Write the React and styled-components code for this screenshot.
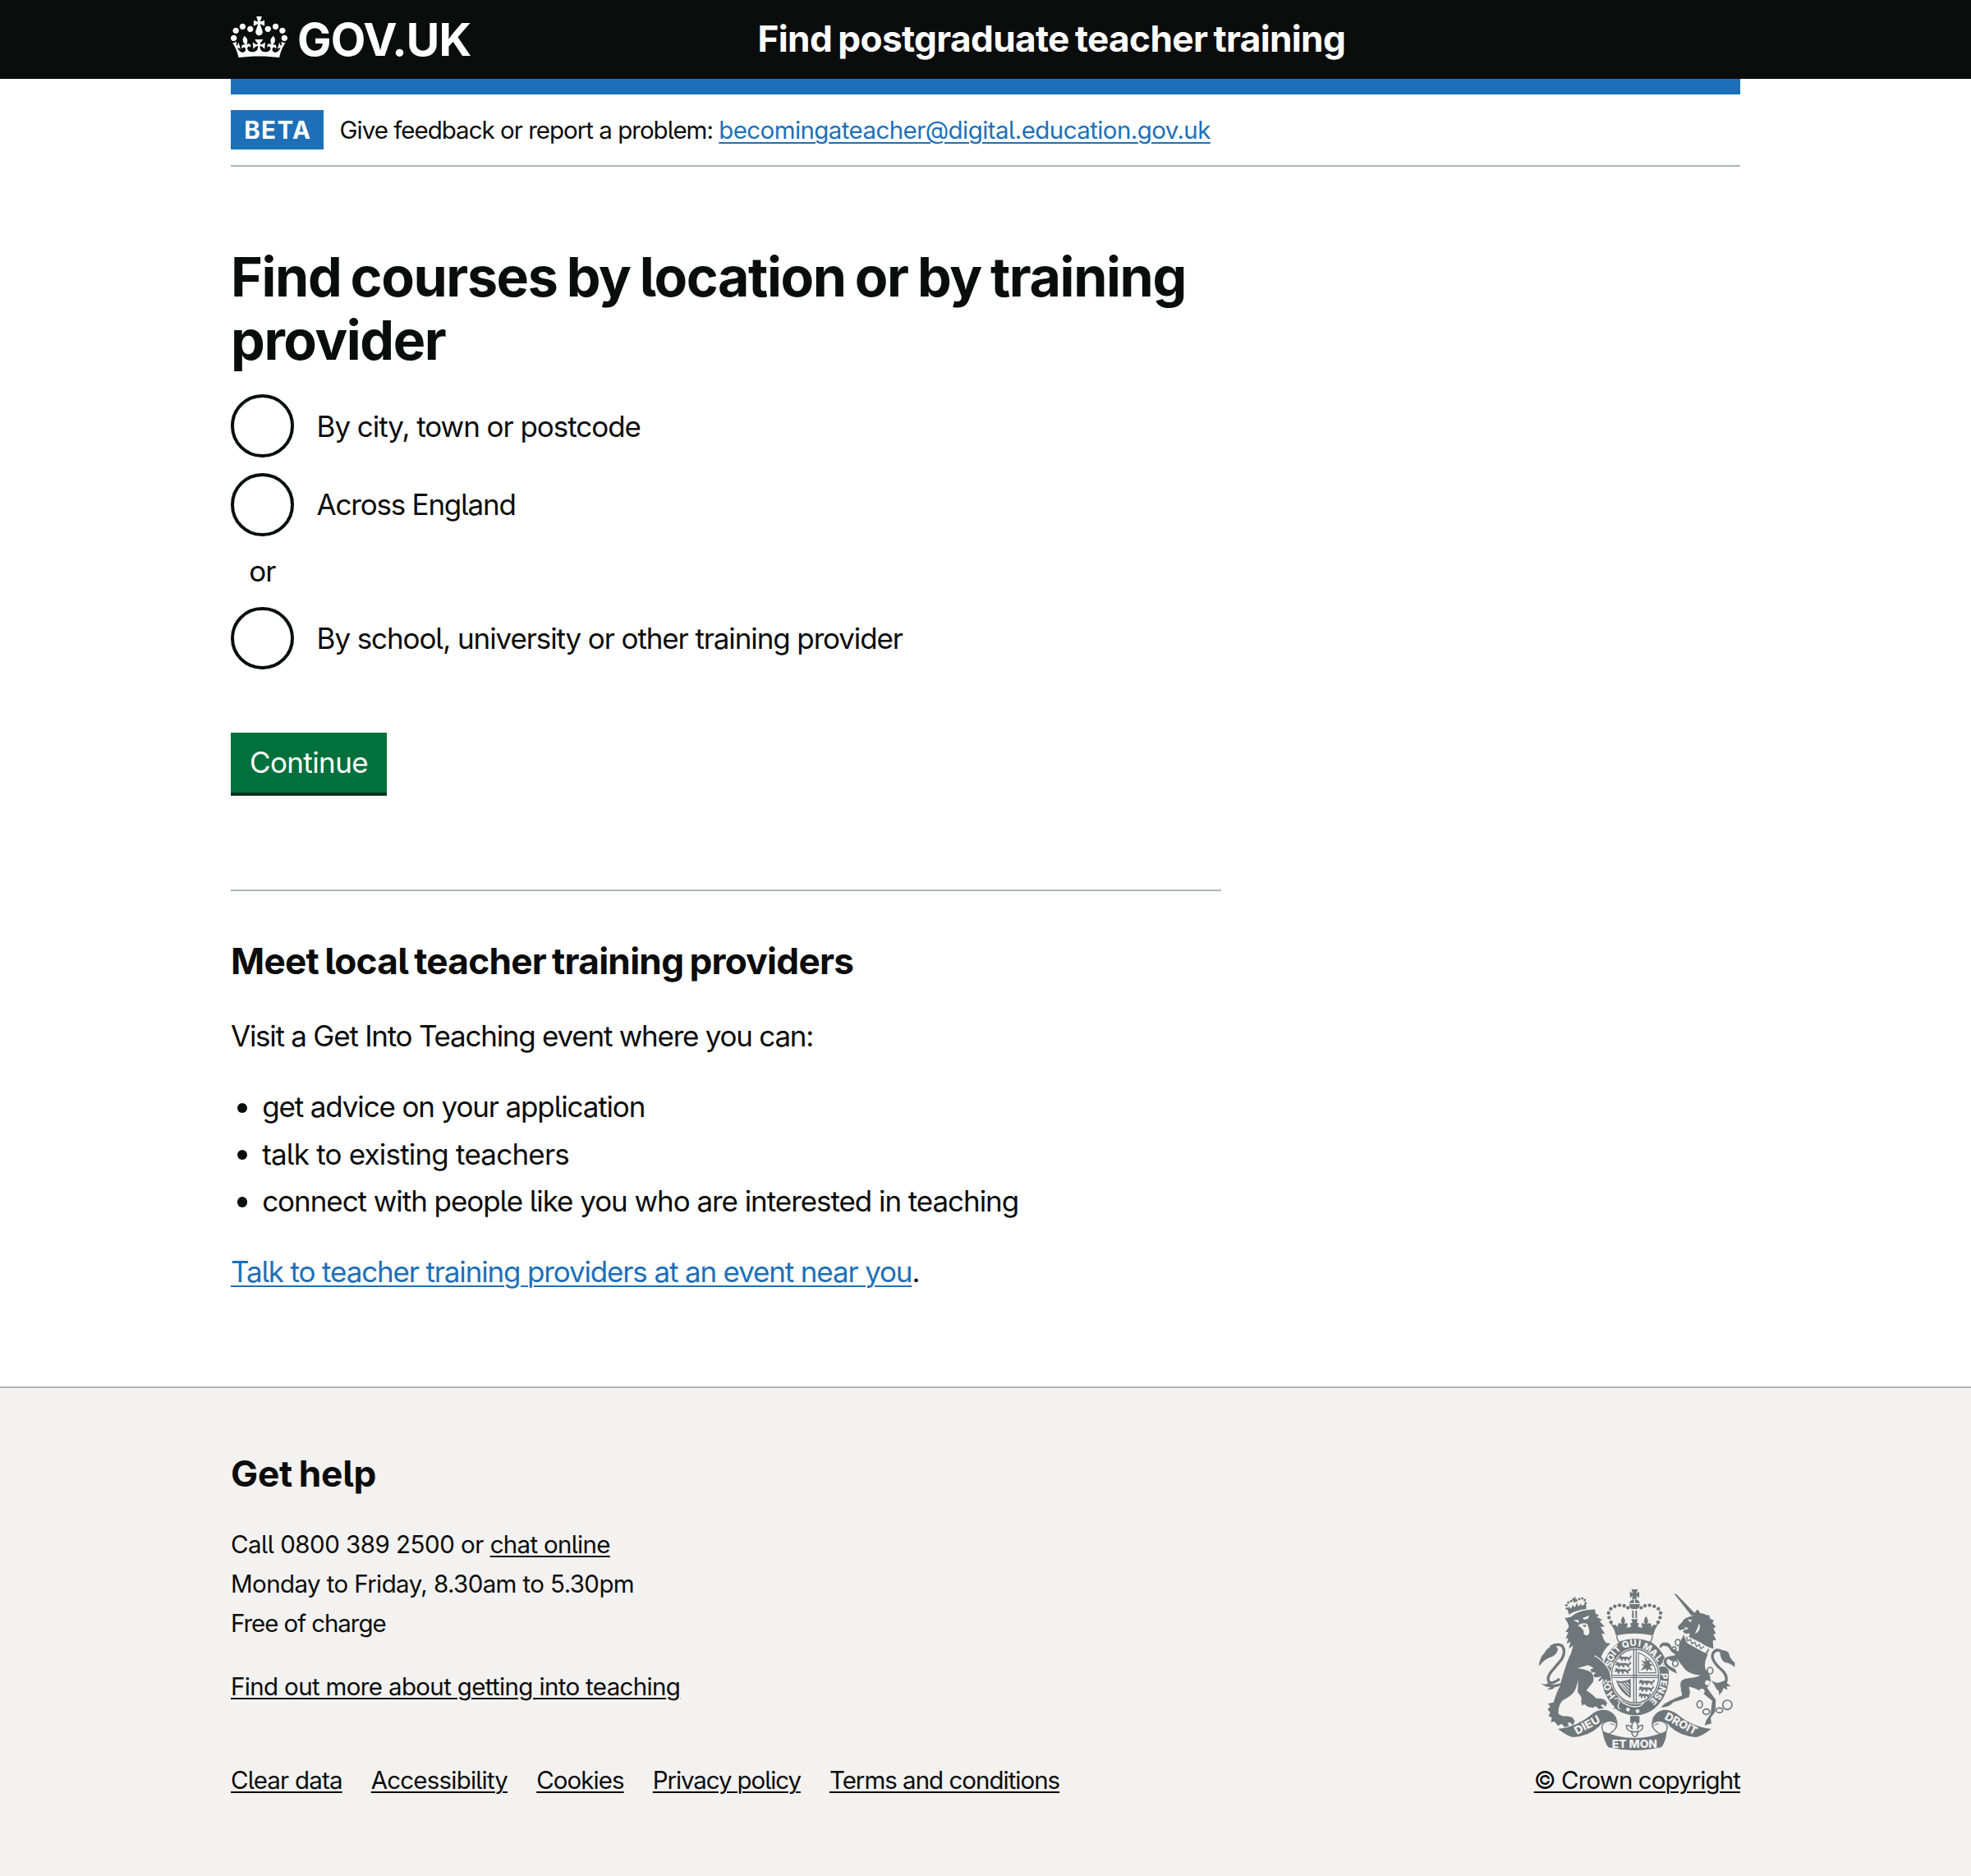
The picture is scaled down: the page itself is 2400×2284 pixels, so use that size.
import React from "react";
import styled, { createGlobalStyle } from "styled-components";

const INK = "#0b0c0c";
const BLUE = "#1d70b8";
const GREEN = "#00703c";
const BORDER = "#b1b4b6";
const CANVAS = "#f3f2f1";
const CREST = "#6f777b";

const GlobalStyle = createGlobalStyle`
  *, *::before, *::after { box-sizing: border-box; }
  html { background: ${CANVAS}; }
  body {
    margin: 0;
    background: #fff;
    color: ${INK};
    font-family: Inter, "Liberation Sans", sans-serif;
    font-feature-settings: "cv05";
  }
`;

const Container = styled.div`
  width: 1838px;
  margin: 0 auto;
`;

const Header = styled.header`
  background: ${INK};
  color: #fff;
  height: 96px;
`;

const HeaderInner = styled(Container)`
  display: flex;
  height: 96px;
`;

const Logo = styled.a`
  display: flex;
  width: 641.5px;
  padding-top: 20px;
  color: #fff;
  text-decoration: none;
`;

const Crown = styled.svg`
  width: 69px;
  height: 50.6px;
  fill: currentColor;
`;

const LogoText = styled.span`
  margin-left: 12px;
  font-size: 55.3px;
  font-weight: 700;
  line-height: 55px;
  letter-spacing: -0.87px;
`;

const ServiceName = styled.a`
  font-size: 44.2px;
  font-weight: 700;
  line-height: 94px;
  letter-spacing: ${(p) => p.$track}px;
  word-spacing: -2.6px;
  color: #fff;
  white-space: nowrap;
`;

const ServiceBar = styled(Container)`
  height: 19px;
  background: ${BLUE};
`;

const PhaseBanner = styled(Container)`
  display: flex;
  align-items: center;
  height: 88px;
  border-bottom: 2px solid ${BORDER};
`;

const PhaseTag = styled.strong`
  width: 113px;
  height: 48px;
  margin-right: 19.5px;
  background: ${BLUE};
  color: #fff;
  font-size: 29.5px;
  line-height: 48px;
  letter-spacing: ${(p) => p.$track}px;
  text-indent: 1.5px;
  text-align: center;
`;

const Text = styled.span`
  letter-spacing: ${(p) => p.$track}px;
  white-space: pre;
`;

const Link = styled.a`
  color: ${(p) => (p.$muted ? INK : BLUE)};
  letter-spacing: ${(p) => p.$track}px;
  text-decoration: underline;
  text-decoration-thickness: 2px;
  text-underline-offset: ${(p) => (p.$muted ? 3 : 4)}px;
  white-space: nowrap;
`;

const PhaseText = styled.p`
  margin: 0;
  font-size: 29.5px;
  line-height: 48px;
`;

const Main = styled.main`
  padding: 96px 0 114.4px;
`;

const TwoThirds = styled.div`
  width: 1206px;
`;

const Title = styled.h1`
  margin: 0 0 28.2px;
  font-size: 66.3px;
  font-weight: 700;
  line-height: 76.6px;
  letter-spacing: ${(p) => p.$track}px;
  word-spacing: -3px;
`;

const RadioRow = styled.label`
  display: flex;
  align-items: center;
  height: 76.6px;
  margin-bottom: ${(p) => (p.$spaced ? 19.1 : 0)}px;
  font-size: 35px;
  line-height: 48px;
`;

const RadioCircle = styled.input`
  appearance: none;
  width: 76.6px;
  height: 76.6px;
  margin: 0 28px 0 0;
  border: 4px solid ${INK};
  border-radius: 50%;
`;

const RadioDivider = styled.div`
  width: 76.6px;
  height: 86px;
  font-size: 35px;
  line-height: 85px;
  text-align: center;
`;

const Button = styled.button`
  display: block;
  width: 190px;
  height: 73px;
  margin: 76.5px 0 118.4px;
  padding: 0;
  border: 0;
  background: ${GREEN};
  box-shadow: 0 3.8px 0 #002d18;
  color: #fff;
  font-family: inherit;
  font-feature-settings: inherit;
  font-size: 35px;
  line-height: 73px;
`;

const Rule = styled.hr`
  height: 2px;
  margin: 0 0 56.5px;
  border: 0;
  background: ${BORDER};
`;

const Heading = styled.h2`
  margin: 0 0 ${(p) => p.$gap}px;
  font-size: 44.2px;
  font-weight: 700;
  line-height: 57.4px;
  letter-spacing: ${(p) => p.$track}px;
  word-spacing: -2.6px;
`;

const Paragraph = styled.p`
  margin: 0;
  font-size: 35px;
  line-height: 47.9px;
`;

const List = styled.ul`
  display: flex;
  flex-direction: column;
  gap: 9.5px;
  margin: 38.3px 0;
  padding: 0;
  list-style: none;
`;

const Item = styled.li`
  display: flex;
  align-items: center;
  padding-left: 8px;
  font-size: 35px;
  line-height: 47.9px;

  &::before {
    content: "";
    width: 12.4px;
    height: 12.4px;
    margin: 1px 17.8px 0 0;
    border-radius: 50%;
    background: ${INK};
  }
`;

const Footer = styled.footer`
  border-top: 2px solid ${BORDER};
  background: ${CANVAS};
  padding: 76px 0 91px;
`;

const FooterInner = styled(Container)`
  display: flex;
  justify-content: space-between;
  align-items: flex-end;
  font-size: 29.5px;
  line-height: 47.9px;
`;

const HelpLines = styled.div`
  display: flex;
  flex-direction: column;
  align-items: flex-start;
  margin-bottom: 28.9px;
`;

const FooterLinks = styled.nav`
  display: flex;
  gap: 35px;
  margin-top: 67px;
`;

const Copyright = styled.div`
  display: flex;
  flex-direction: column;
  align-items: flex-end;
`;

const Crest = styled.svg`
  width: 240px;
  height: 198px;
  margin: 0 6px 12.5px 0;
`;

const CrownMark = () => (
  <Crown viewBox="0 0 132 97" preserveAspectRatio="none" aria-hidden="true">
    <path d="M25 30.2c3.5 1.5 7.7-.2 9.1-3.7 1.5-3.6-.2-7.8-3.9-9.2-3.6-1.4-7.6.3-9.1 3.9-1.4 3.5.3 7.5 3.9 9zM9 39.5c3.6 1.5 7.8-.2 9.2-3.7 1.5-3.6-.2-7.8-3.9-9.1-3.6-1.5-7.6.2-9.1 3.8-1.4 3.5.3 7.5 3.8 9zM4.4 57.2c3.5 1.5 7.7-.2 9.1-3.8 1.5-3.6-.2-7.7-3.9-9.1-3.5-1.5-7.6.3-9.1 3.8-1.4 3.5.3 7.6 3.9 9.1zm38.3-21.4c3.5 1.5 7.7-.2 9.1-3.8 1.5-3.6-.2-7.7-3.9-9.1-3.6-1.5-7.6.3-9.1 3.8-1.3 3.6.4 7.7 3.9 9.1zm64.4-5.6c-3.6 1.5-7.8-.2-9.1-3.7-1.5-3.6.2-7.8 3.8-9.2 3.6-1.4 7.7.3 9.2 3.9 1.3 3.5-.4 7.5-3.9 9zm15.9 9.3c-3.6 1.5-7.7-.2-9.1-3.7-1.5-3.6.2-7.8 3.7-9.1 3.6-1.5 7.7.2 9.2 3.8 1.5 3.5-.3 7.5-3.8 9zm4.7 17.7c-3.6 1.5-7.8-.2-9.2-3.8-1.5-3.6.2-7.7 3.9-9.1 3.6-1.5 7.7.3 9.2 3.8 1.3 3.5-.4 7.6-3.9 9.1zM89.3 35.8c-3.6 1.5-7.8-.2-9.2-3.8-1.4-3.6.2-7.7 3.9-9.1 3.6-1.5 7.7.3 9.2 3.8 1.4 3.6-.3 7.7-3.9 9.1zM69.7 17.7l8.9 4.7V9.3l-8.9 2.8c-.2-.3-.5-.6-.9-.9L72.4 0H59.6l3.5 11.2c-.3.3-.6.5-.9.9l-8.8-2.8v13.1l8.8-4.7c.3.3.6.7.9.9l-5 15.4v.1c-.2.8-.4 1.6-.4 2.4 0 4.1 3.1 7.5 7 8.1h.2c.3 0 .7.1 1 .1.4 0 .7 0 1-.1h.2c4-.6 7.1-4.1 7.1-8.1 0-.8-.1-1.7-.4-2.4V34l-5.1-15.4c.4-.2.7-.6 1-.9zM66 92.8c16.9 0 32.8 1.1 47.1 3.2 4-16.9 8.9-26.7 14-33.5l-9.6-3.4c1 4.9 1.1 7.2 0 10.2-1.5-1.4-3-4.3-4.2-8.7L108.6 76c2.8-2 5-3.2 7.5-3.3-4.4 9.4-10 11.9-13.6 11.2-4.3-.8-6.3-4.6-5.6-7.9 1-4.7 5.7-5.9 8-.5 4.3-8.7-3-11.4-7.6-8.8 7.1-7.2 7.9-13.5 2.1-21.1-8 6.1-8.1 12.3-4.5 20.8-4.7-5.4-12.1-2.5-9.5 6.2 3.4-5.2 7.9-2 7.2 3.1-.6 4.3-6.4 7.8-13.5 7.2-10.3-.9-10.9-8-11.2-13.8 2.5-.5 7.1 1.8 11 7.3L80.2 60c-4.1 4.4-8 5.3-12.3 5.4 1.4-4.4 8-11.6 8-11.6H55.5s6.4 7.2 7.9 11.6c-4.2-.1-8-1-12.3-5.4l1.4 16.4c3.9-5.5 8.5-7.7 10.9-7.3-.3 5.8-.9 12.8-11.1 13.8-7.2.6-12.9-2.9-13.5-7.2-.7-5 3.8-8.3 7.1-3.1 2.7-8.7-4.6-11.6-9.4-6.2 3.7-8.5 3.6-14.7-4.6-20.8-5.8 7.6-5 13.9 2.2 21.1-4.7-2.6-11.9.1-7.7 8.8 2.3-5.5 7.1-4.2 8.1.5.7 3.3-1.3 7.1-5.7 7.9-3.5.7-9-1.8-13.5-11.2 2.5.1 4.7 1.3 7.5 3.3l-4.7-15.4c-1.2 4.4-2.7 7.2-4.3 8.7-1.1-3-.9-5.3 0-10.2l-9.5 3.4c5 6.9 9.9 16.7 14 33.5 14.8-2.1 30.8-3.2 47.7-3.2z" />
  </Crown>
);

/* Motto letters round the garter: glyph, centre x, centre y, rotation */
const GARTER = [
  ["H", 306, 432, -128], ["O", 293, 402, -106],
  ["S", 299, 317, -66], ["O", 305, 294, -56], ["I", 315, 276, -48], ["T", 328, 263, -42],
  ["Q", 359, 246, -20], ["U", 387, 240, -4], ["I", 410, 242, 8],
  ["M", 439, 257, 27], ["A", 463, 276, 42], ["L", 481, 297, 53], ["Y", 493, 322, 66],
  ["P", 500, 362, 90], ["E", 498, 387, 100], ["N", 491, 412, 112], ["S", 478, 436, 124], ["E", 461, 454, 134],
];

const ARCH_DOTS = [
  [306, 165], [299, 148], [297, 131], [305, 116], [320, 107], [337, 103], [354, 105], [368, 112],
];
const LION_DOTS = [
  [145, 115], [143, 103], [150, 93], [160, 88], [179, 86], [190, 80], [201, 78], [210, 84], [213, 95],
];

/* One passant lion of the English quarters, drawn in a 62 x 22 box */
const Passant = ({ x, y, w = 1 }) => (
  <path
    transform={`translate(${x} ${y}) scale(${w} 1)`}
    d="M2 3L10 1L16 5L34 5Q42 4 46 8Q54 8 56 0L60 2Q60 12 50 13L54 19L48 21L42 14L34 13L36 20L29 21L26 14L18 14L20 20L13 21L11 13L4 15L0 11L6 8Z"
  />
);

const Ribbon = () => (
  <g>
    <path fill={CREST} d="M112 555Q150 550 178 538Q215 520 240 498Q262 483 288 486Q312 491 320 508L328 542Q322 528 300 527Q278 526 262 546Q228 580 168 585Q150 584 112 555Z" />
    <path fill="none" stroke={CREST} strokeWidth="4" d="M320 508Q330 530 327 545Q320 560 304 570Q290 578 280 568Q268 552 276 538Q286 526 300 526" />
    <path fill="none" stroke={CREST} strokeWidth="3" d="M327 548Q318 535 303 536" />
  </g>
);

const CoatOfArms = () => (
  <Crest viewBox="40 42 720 594" aria-hidden="true">
    <g fill={CREST}>
      {/* lion's crown */}
      <path d="M147 117L153 108L160 116L166 102L174 111L182 94L186 108L196 98L201 106L210 98L216 103L215 117Q180 120 152 137Z" />
      <path d="M166 76L172 79L171 73L178 74L175 80L182 80L181 87L175 85L176 93L169 93L170 86L163 87Z" />
      {LION_DOTS.map(([x, y]) => <circle key={`${x}-${y}`} cx={x} cy={y} r="4.6" />)}
      {/* lion */}
      <path d="M137 150L158 146Q185 124 222 120L247 118L250 135L262 138L254 146L275 157L264 161L283 181L268 182L284 208L272 206Q276 224 287 240L304 243Q280 264 270 292L300 332L306 384L298 380L294 386L288 376L280 388L275 374L262 382L258 376L268 366L246 366L242 358L252 350L234 346L231 338L243 334Q234 326 222 322L183 333Q220 338 236 350Q246 366 240 384Q225 402 216 414Q240 430 252 443L270 444L282 448L292 460L286 474L278 466L268 468L280 480L262 482L250 472L240 478L222 474L208 464L199 470L197 450Q202 440 184 420Q186 400 186 372Q182 400 172 418Q160 436 130 450Q116 464 114 486L114 500Q128 510 144 508L164 512L174 526L166 542L158 532L148 532L152 544L136 548L126 536L112 544L100 528L86 530L90 514L78 508L84 494L74 484L84 474L76 462L96 458Q108 418 118 402Q126 372 134 346Q146 306 160 278L168 250L152 262L158 236L144 244L150 222L140 226L150 202L140 200L152 182L148 168Z" />
      {/* lion's tail */}
      <path fill="none" stroke={CREST} strokeWidth="10" d="M84 256Q110 240 128 252Q142 272 126 300L86 348Q70 370 80 384Q92 392 118 372" />
      <path d="M42 326Q46 292 62 278Q74 254 102 249L112 262Q110 282 92 290Q66 296 42 326ZM50 388Q66 396 76 388L92 392Q106 394 124 386Q120 402 100 402Q94 414 72 410Q84 406 84 402Q62 402 50 388Z" />
      <path fill={CANVAS} d="M168 158L190 168L186 156ZM202 150L226 140L222 152L208 156ZM184 178Q200 164 220 172L226 192Q230 212 216 214Q204 212 206 196L194 182Z" />
      <path d="M200 176L216 174L212 184Z" />

      {/* royal crown */}
      <path d="M380 45H404L398 60L409 53V76L398 69L401 80H382L386 69L375 76V53L386 60ZM372 95Q380 82 390 82V95ZM394 82Q406 82 412 95H394ZM372 99H412Q410 112 402 117H382Q374 112 372 99ZM383 122H389V150H383ZM395 122H401V150H395Z" />
      {ARCH_DOTS.map(([x, y]) => (
        <g key={`${x}-${y}`}>
          <circle cx={x} cy={y} r="6.6" />
          <circle cx={784 - x} cy={y} r="6.6" />
        </g>
      ))}
      <path d="M302 168Q316 178 322 174L332 184Q328 170 338 168L346 172Q338 158 350 143Q362 158 354 172L364 167Q370 176 362 184Q372 186 380 180L376 170L384 166L380 154H404L400 166L408 170L404 180Q412 186 422 184Q414 176 420 167L430 172Q422 158 434 143Q446 158 438 172L446 168Q456 170 452 184L462 174Q468 178 482 168Q464 190 461 212Q392 198 323 212Q320 190 302 168Z" />

      {/* garter */}
      <ellipse cx="395" cy="363" rx="125" ry="144" stroke={CANVAS} strokeWidth="5" />
      <path fill={CANVAS} stroke={CREST} strokeWidth="4" d="M336 238Q322 222 330 210Q392 198 454 210Q462 222 448 238Q392 216 336 238Z" />
      <ellipse cx="394" cy="362" rx="91" ry="103" fill={CANVAS} />
      <ellipse cx="394" cy="362" rx="86" ry="98" fill="none" stroke={CREST} strokeWidth="4" />
      <path d="M387 264H391V460H387ZM396 264H400V460H396ZM308 357H480V361H308ZM308 365H480V369H308Z" />
      <Passant x="334" y="286" w={0.78} />
      <Passant x="320" y="309" />
      <Passant x="318" y="332" />
      <Passant x="406" y="374" />
      <Passant x="406" y="398" w={0.95} />
      <Passant x="406" y="422" w={0.75} />
      <path fill="none" stroke={CREST} strokeWidth="3.4" d="M406 280V350H470Q466 302 406 276Z" />
      <path d="M414 342L426 326L416 318L430 320L416 304L432 310L428 292L440 306L452 302L446 314L460 322L448 326L458 342L444 336L436 346L434 334Z" />
      <path d="M324 378Q350 386 378 372V442Q340 424 324 378Z" />
      <path fill="none" stroke={CANVAS} strokeWidth="3.4" d="M334 386L372 430M342 387L373 419M352 386L373 407M362 384L373 395" />
      <path d="M312 484Q320 478 322 466Q314 452 326 446Q346 446 346 462Q360 472 378 478Q410 482 440 468L452 486Q420 508 380 504Q340 498 322 480Z" />
      <path fill="none" stroke={CANVAS} strokeWidth="4" d="M300 468Q314 474 310 490M318 446Q334 436 348 458Q386 482 414 470L426 458M330 452Q342 456 334 464Q328 472 338 484" />
      <circle cx="368" cy="484" r="7" fill={CANVAS} />
      <circle cx="403" cy="490" r="7" fill={CANVAS} />
      <g fill={CANVAS} fontSize="34" fontWeight="800" textAnchor="middle">
        {GARTER.map(([ch, x, y, r], i) => (
          <text key={i} transform={`translate(${x} ${y}) rotate(${r})`} y="12">{ch}</text>
        ))}
      </g>
      {/* lion's forepaw over the garter */}
      <path stroke={CANVAS} strokeWidth="3.5" d="M248 288Q276 304 296 334Q306 352 308 384L298 380L294 388L288 376L280 390L275 374L262 384L257 376L268 366L252 364Z" />
      <path d="M236 300L250 290L280 330L262 366L246 366L242 358L252 350L234 346L231 338L243 334Z" />

      {/* unicorn */}
      <path d="M536 60L546 64L614 134L600 142Z" />
      <path d="M549 182L566 164Q570 152 588 146L604 142L612 130L622 118L632 132Q650 134 656 140L664 138L668 152L682 158L676 168L690 182L680 186L688 206L680 210L690 230L678 232L680 262Q660 258 634 240L590 218Q600 200 580 208L568 200L578 190L556 194Z" />
      <path stroke={CANVAS} strokeWidth="3" d="M570 214L578 220L584 240L650 276L662 262L666 258L660 284Q640 330 660 346Q676 364 668 392L658 404Q676 430 690 448Q690 470 688 492L672 514L674 536L646 544L652 524L668 500L674 452Q640 424 618 410L592 402Q600 420 592 440Q560 452 534 458Q520 478 486 478L500 462Q540 440 564 432Q560 412 558 396Q556 370 590 368Q612 366 628 360Q590 356 572 334L548 302Q538 318 514 300Q504 312 520 324L542 336L550 356L530 346Q500 330 496 310Q500 290 520 288L540 284Q524 276 514 256L498 252L484 262Q476 248 496 238Q522 232 530 260L552 270Q550 240 570 214Z" />
      <path fill="none" stroke={CANVAS} strokeWidth="5" d="M574 214Q590 238 658 280" />
      <path fill="none" stroke={CREST} strokeWidth="4" d="M572 212L568 230Q600 262 652 280L664 262M582 218l4 16 10-6 6 16 10-6 6 16 10-8 6 16 12-8" />
      <path fill={CANVAS} d="M586 154l18 4-10 6zM572 180q6 8 18 4l-10 10zM628 168q10 26-16 40q10-18 16-40z" />
      {/* unicorn's tail */}
      <path fill="none" stroke={CREST} strokeWidth="10" d="M716 276Q690 256 678 280Q670 300 700 330Q734 356 726 382Q718 398 696 394" />
      <path d="M704 272Q720 262 736 276Q740 300 758 312L758 330Q742 314 722 312Q704 300 704 272ZM670 376Q686 388 698 386L722 378Q730 390 744 398L728 400L732 412L716 406Q714 420 700 432Q704 416 692 410Q684 392 670 376Z" />
      {/* chain */}
      <g fill="none" stroke={CREST} strokeWidth="5">
        <ellipse cx="550" cy="239" rx="9" ry="11" />
        <ellipse cx="536" cy="262" rx="7" ry="7" />
        <ellipse cx="541" cy="316" rx="10" ry="11" fill={CANVAS} />
        <ellipse cx="668" cy="342" rx="10" ry="12" fill={CANVAS} />
        <ellipse cx="630" cy="465" rx="10" ry="13" />
        <ellipse cx="654" cy="492" rx="12" ry="10" />
        <ellipse cx="702" cy="487" rx="12" ry="9" />
        <circle cx="731" cy="467" r="17" />
      </g>
      <circle cx="658" cy="386" r="9" fill={CANVAS} />
      <circle cx="638" cy="418" r="10" fill={CANVAS} />

      {/* badge under the garter */}
      <path d="M376 508H410V534L393 528L376 534Z" />
      <path fill={CANVAS} stroke={CREST} strokeWidth="4.5" d="M393 524Q410 540 402 556Q410 540 422 542Q424 562 404 564Q404 580 393 584Q382 580 382 564Q362 562 362 542Q376 540 384 556Q376 540 393 524Z" />
      <path d="M378 563h30v5h-30z" />

      {/* ribbon */}
      <Ribbon />
      <g transform="translate(784 0) scale(-1 1)"><Ribbon /></g>
      <path d="M274 562Q330 588 392 588Q454 588 510 562Q506 604 490 622Q440 633 392 633Q344 633 296 622Q282 604 274 562Z" />
    </g>
    <g fill={CANVAS} fontWeight="800" fontSize="41">
      <text transform="translate(182 577) rotate(-29)" textLength="100" lengthAdjust="spacingAndGlyphs">DIEU</text>
      <text x="309" y="625" textLength="166" lengthAdjust="spacingAndGlyphs">ET MON</text>
      <text transform="translate(499 518) rotate(28)" textLength="128" lengthAdjust="spacingAndGlyphs">DROIT</text>
    </g>
  </Crest>
);

export default function App() {
  return (
    <>
      <GlobalStyle />
      <Header>
        <HeaderInner>
          <Logo>
            <CrownMark />
            <LogoText>GOV.UK</LogoText>
          </Logo>
          <ServiceName $track={-0.67}>Find postgraduate teacher training</ServiceName>
        </HeaderInner>
      </Header>
      <ServiceBar />
      <PhaseBanner>
        <PhaseTag $track={1.4}>BETA</PhaseTag>
        <PhaseText>
          <Text $track={-0.99}>Give feedback or report a problem: </Text>
          <Link $track={-0.59}>becomingateacher@digital.education.gov.uk</Link>
        </PhaseText>
      </PhaseBanner>
      <Container>
        <Main>
          <TwoThirds>
            <Title $track={-1.41}>Find courses by location or by training provider</Title>
            <RadioRow $spaced>
              <RadioCircle type="radio" name="by" />
              <Text $track={-1.05}>By city, town or postcode</Text>
            </RadioRow>
            <RadioRow>
              <RadioCircle type="radio" name="by" />
              <Text $track={-1.22}>Across England</Text>
            </RadioRow>
            <RadioDivider><Text $track={-1}>or</Text></RadioDivider>
            <RadioRow>
              <RadioCircle type="radio" name="by" />
              <Text $track={-1.11}>By school, university or other training provider</Text>
            </RadioRow>
            <Button><Text $track={-0.6}>Continue</Text></Button>
            <Rule />
            <Heading $gap={39} $track={-0.74}>Meet local teacher training providers</Heading>
            <Paragraph><Text $track={-1.25}>Visit a Get Into Teaching event where you can:</Text></Paragraph>
            <List>
              <Item><Text $track={-1.14}>get advice on your application</Text></Item>
              <Item><Text $track={-0.8}>talk to existing teachers</Text></Item>
              <Item><Text $track={-1.06}>connect with people like you who are interested in teaching</Text></Item>
            </List>
            <Paragraph>
              <Link $track={-1.15}>Talk to teacher training providers at an event near you</Link>.
            </Paragraph>
          </TwoThirds>
        </Main>
      </Container>
      <Footer>
        <FooterInner>
          <div>
            <Heading $gap={34} $track={-0.2}>Get help</Heading>
            <HelpLines>
              <span>
                <Text $track={-0.5}>Call 0800 389 2500 or </Text>
                <Link $muted $track={-0.7}>chat online</Link>
              </span>
              <Text $track={-0.6}>Monday to Friday, 8.30am to 5.30pm</Text>
              <Text $track={-1.07}>Free of charge</Text>
            </HelpLines>
            <Link $muted $track={-0.65}>Find out more about getting into teaching</Link>
            <FooterLinks>
              <Link $muted $track={-0.8}>Clear data</Link>
              <Link $muted $track={-0.8}>Accessibility</Link>
              <Link $muted $track={-0.92}>Cookies</Link>
              <Link $muted $track={-1.1}>Privacy policy</Link>
              <Link $muted $track={-1}>Terms and conditions</Link>
            </FooterLinks>
          </div>
          <Copyright>
            <CoatOfArms />
            <Link $muted $track={-0.92}>© Crown copyright</Link>
          </Copyright>
        </FooterInner>
      </Footer>
    </>
  );
}
